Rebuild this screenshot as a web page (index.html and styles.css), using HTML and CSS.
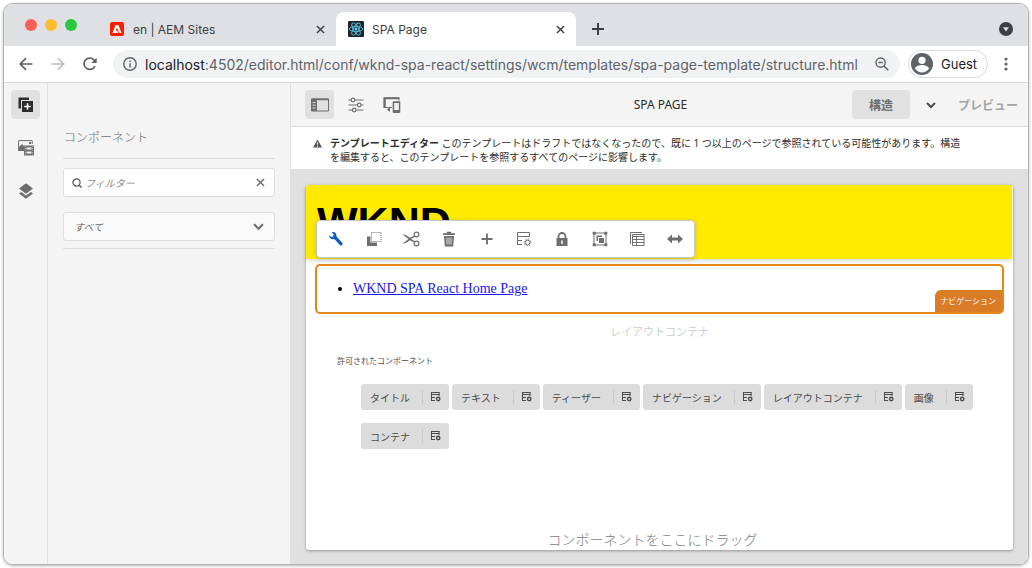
FILE: index.html
```html
<!DOCTYPE html>
<html lang="ja">
<head>
<meta charset="utf-8">
<title>SPA Page</title>
<link rel="stylesheet" href="styles.css">
</head>
<body>
<svg class="defs" aria-hidden="true">
  <symbol id="policy" viewBox="0 0 10 10"><path d="M0 .5h8.500M0 2.500h8.500M0 5.500h4M0 8.500h4M.5 0v9M8 0v4" fill="none" stroke="currentColor"/><circle cx="7.200" cy="7" r="1.700" fill="none" stroke="currentColor" stroke-width="1.400"/></symbol>
  <symbol id="cross" viewBox="0 0 10 10"><path d="M1 1l8 8M9 1L1 9" fill="none" stroke="currentColor" stroke-width="1.6"/></symbol>
  <symbol id="chevron" viewBox="0 0 10 10"><path d="M1 3l4 4 4-4" fill="none" stroke="currentColor" stroke-width="2"/></symbol>
</svg>
<div class="window">
  <header class="tabs">
    <div class="lights"><span class="light red"></span><span class="light amber"></span><span class="light green"></span></div>
    <div class="tab">
      <svg class="favicon small" viewBox="0 0 14 14"><rect width="14" height="14" rx="2" fill="#fa1e00"/><path d="M2.5 11L5.6 3h2.8l3.1 8H9.3L7 5.5 5.8 8.6h1.5l1 2.4z" fill="#fff"/></svg>
      <span class="tab-title">en | AEM Sites</span>
      <button class="plain close" aria-label="Close tab"><svg viewBox="0 0 10 10"><use href="#cross"/></svg></button>
    </div>
    <div class="tab active">
      <svg class="favicon" viewBox="0 0 16 16"><rect width="16" height="16" rx="1" fill="#20232a"/><g fill="none" stroke="#53c1de" stroke-width=".9"><ellipse cx="8" cy="8" rx="6.8" ry="2.6"/><ellipse cx="8" cy="8" rx="6.8" ry="2.6" transform="rotate(60 8 8)"/><ellipse cx="8" cy="8" rx="6.8" ry="2.6" transform="rotate(120 8 8)"/></g><circle cx="8" cy="8" r="1.4" fill="#61dafb"/></svg>
      <span class="tab-title">SPA Page</span>
      <button class="plain close" aria-label="Close tab"><svg viewBox="0 0 10 10"><use href="#cross"/></svg></button>
    </div>
    <button class="plain new-tab" aria-label="New tab"><svg viewBox="0 0 12 12"><path d="M6 0v12M0 6h12" stroke="currentColor" stroke-width="2"/></svg></button>
    <button class="plain tab-menu" aria-label="Search tabs"><svg viewBox="0 0 14 14"><circle cx="7" cy="7" r="7" fill="#3c4043"/><path d="M4 5.3h6L7 9.6z" fill="#dee0e4"/></svg></button>
  </header>

  <nav class="address">
    <button class="plain nav-btn" aria-label="Back"><svg viewBox="0 0 14 14"><path d="M13.5 7H1.5M7 1.2L1.2 7 7 12.8" fill="none" stroke="#5f6368" stroke-width="1.7"/></svg></button>
    <button class="plain nav-btn" aria-label="Forward"><svg viewBox="0 0 14 14"><path d="M.5 7h12M7 1.2L12.8 7 7 12.8" fill="none" stroke="#babcbf" stroke-width="1.5"/></svg></button>
    <button class="plain nav-btn" aria-label="Reload"><svg viewBox="0 0 14 14"><path d="M12 9A5.7 5.7 0 1 1 11 2.9L12.6 4.6" fill="none" stroke="#5f6368" stroke-width="1.7"/><path d="M13.7.7v5.4H8.3z" fill="#5f6368"/></svg></button>
    <div class="url">
      <svg class="info" viewBox="0 0 14 14"><circle cx="7" cy="7" r="6.2" fill="none" stroke="#5f6368" stroke-width="1.4"/><path d="M7 6.2v4.2M7 3.4v1.5" stroke="#5f6368" stroke-width="1.5"/></svg>
      <span class="url-text"><span class="host">localhost</span>:4502/editor.html/conf/wknd-spa-react/settings/wcm/templates/spa-page-template/structure.html</span>
      <button class="plain magnify" aria-label="Zoom"><svg viewBox="0 0 14 14"><circle cx="5.6" cy="5.6" r="4.6" fill="none" stroke="#5f6368" stroke-width="1.4"/><path d="M3.4 5.6h4.4M9 9l4.3 4.3" stroke="#5f6368" stroke-width="1.5"/></svg></button>
    </div>
    <button class="guest"><svg viewBox="0 0 22 22"><circle cx="11" cy="11" r="11" fill="#5f6368"/><circle cx="11" cy="7.3" r="3.6" fill="#fff"/><path d="M3.8 15.2c1.6-2.4 4.4-3.2 7.2-3.2s5.6.8 7.2 3.2c-1.6 2.6-4.2 4.2-7.2 4.2s-5.600-1.600-7.200-4.200z" fill="#fff"/></svg>Guest</button>
    <button class="plain dots" aria-label="Menu"><svg viewBox="0 0 4 14"><g fill="#5f6368"><circle cx="2" cy="2" r="1.6"/><circle cx="2" cy="7" r="1.6"/><circle cx="2" cy="12" r="1.6"/></g></svg></button>
  </nav>

  <div class="app">
    <nav class="rail">
      <button class="plain tool selected" aria-label="Components"><svg viewBox="0 0 16 16"><path d="M.5 11.500V.5H11V3H3v8.500z" fill="#2c2c2c"/><path d="M4 4h11v11H4z" fill="#2c2c2c"/><path d="M9.500 6.200v6.600M6.200 9.500h6.600" stroke="#fff" stroke-width="1.500"/></svg></button>
      <button class="plain tool" aria-label="Assets"><svg viewBox="0 0 16 16"><path d="M.6 11V.6h13.600V4" fill="none" stroke="#6e6e6e"/><path d="M1 11V7l3-3 2.500 2.500V11zM11 2h2v2h-2z" fill="#6e6e6e"/><path d="M6 5.500h10v10H6z" fill="#6e6e6e"/><path d="M8.500 7.500h5v2h-5zM8.500 11.500h5v2h-5z" fill="#f4f4f4"/><path d="M7.300 6v9M14.700 6v9" stroke="#ccc" stroke-width=".8" stroke-dasharray="1 1"/></svg></button>
      <button class="plain tool" aria-label="Content tree"><svg viewBox="0 0 16 16"><path d="M8 .2l7 5.300-7 5.300-7-5.300z" fill="#6e6e6e"/><path d="M1 10.600l2.200-1.600L8 12.400 12.800 9l2.200 1.600-7 5.200z" fill="#6e6e6e"/></svg></button>
    </nav>

    <aside class="panel">
      <h2 class="panel-title">コンポーネント</h2>
      <div class="field filter">
        <svg class="search" viewBox="0 0 10 10"><circle cx="4.500" cy="4.500" r="3.600" fill="none" stroke="#555" stroke-width="1.200"/><path d="M7 7l2.500 2.500" stroke="#555" stroke-width="1.500"/></svg>
        <input class="filter-input" type="text" placeholder="フィルター" aria-label="フィルター">
        <button class="plain clear" aria-label="Clear"><svg viewBox="0 0 10 10"><use href="#cross"/></svg></button>
      </div>
      <div class="field group">
        <select class="group-select" aria-label="コンポーネント"><option>すべて</option></select>
        <svg class="caret" viewBox="0 0 10 10"><use href="#chevron"/></svg>
      </div>
      <div class="list"></div>
    </aside>

    <main class="editor">
      <header class="bar">
        <div class="bar-left">
          <button class="plain tool selected" aria-label="Side panel"><svg class="wide" viewBox="0 0 18 14"><path d="M.5 1h17v12H.5z" fill="none" stroke="#6e6e6e"/><path d="M.5.5h17v1.800H.5zM.5 1H6v12H.5z" fill="#6e6e6e"/><path d="M1.500 4.500h3M1.500 7.200h3M1.500 10h3" stroke="#ddd"/></svg></button>
          <button class="plain tool" aria-label="Page information"><svg viewBox="0 0 16 16"><g fill="none" stroke="#6e6e6e" stroke-width="1.200"><path d="M.5 3h2.700M7 3h8.500M.5 8h8.800M13 8h2.500M.5 13h3.800M8.200 13h7.300"/><circle cx="5" cy="3" r="1.800"/><circle cx="11.200" cy="8" r="1.800"/><circle cx="6.200" cy="13" r="1.800"/></g></svg></button>
          <button class="plain tool" aria-label="Emulator"><svg class="wide" viewBox="0 0 18 16"><path d="M9 10.500H1.200V1h14.600v2.500" fill="none" stroke="#6e6e6e"/><path d="M.5.3h16v2H.5zM.5 1h2.300v10H.5z" fill="#6e6e6e"/><path d="M4 12.500l3-2.500v5z" fill="#6e6e6e"/><path d="M10.700 4.200h5.600a1 1 0 0 1 1 1V15a1 1 0 0 1-1 1h-5.600a1 1 0 0 1-1-1V5.200a1 1 0 0 1 1-1z" fill="#6e6e6e"/><path d="M11.200 6h4.600v7h-4.600z" fill="#f4f4f4"/></svg></button>
        </div>
        <h1 class="title">SPA PAGE</h1>
        <div class="bar-right">
          <button class="mode">構造</button>
          <button class="plain mode-menu" aria-label="Mode"><svg viewBox="0 0 10 10"><use href="#chevron"/></svg></button>
          <button class="plain preview">プレビュー</button>
        </div>
      </header>

      <section class="notice">
        <svg class="warn" viewBox="0 0 10 9"><path d="M5 0l5 9H0z" fill="#555"/><path d="M5 3v3M5 7v1.200" stroke="#fff"/></svg>
        <p class="notice-text"><b>テンプレートエディター</b> このテンプレートはドラフトではなくなったので、既に 1 つ以上のページで参照されている可能性があります。構造<br>を編集すると、このテンプレートを参照するすべてのページに影響します。</p>
      </section>

      <div class="canvas">
        <article class="page">
          <div class="banner">
            <div class="brand">WKND</div>
            <div class="actions" role="toolbar">
              <button class="plain action" aria-label="Configure"><svg viewBox="0 0 16 16"><path d="M1 4.200L3.200 6l2-.6.500-2L3.800 1.200c2.800-.8 5 1 4.600 4l6 6.800c.8 1.600-.8 3-2.200 2.200L6.200 8C3.500 8.800 1 7 1 4.200z" fill="#0d5fc0"/></svg></button>
              <button class="plain action" aria-label="Copy"><svg viewBox="0 0 16 16"><path d="M1 5.500h3.500v6H11V15H1z" fill="#6e6e6e"/><path d="M5.500 1.500h9.500v9H5.500z" fill="none" stroke="#6e6e6e" stroke-dasharray="1 1"/></svg></button>
              <button class="plain action" aria-label="Cut"><svg class="wide" viewBox="0 0 18 16"><g fill="none" stroke="#6e6e6e" stroke-width="1.200"><circle cx="14.500" cy="3.500" r="2.400"/><circle cx="14.500" cy="12.500" r="2.400"/></g><path d="M.5 3.500c3 0 5 1.500 7.500 3.200L12.200 4.400l.8 1.200L9.200 8l3.800 2.400-.8 1.200L8 9.300C5.500 11 3.500 12.500.5 12.500L6.500 8z" fill="#6e6e6e"/></svg></button>
              <button class="plain action" aria-label="Delete"><svg viewBox="0 0 16 16"><path d="M2 2.200h3.500L6.200.7h3.600l.7 1.500H14V4H2zM3 5h10l-.8 10.500H3.800z" fill="#6e6e6e"/><path d="M6 6.500v7M8 6.500v7M10 6.500v7" stroke="#fff" stroke-width=".8"/></svg></button>
              <button class="plain action" aria-label="Insert"><svg viewBox="0 0 16 16"><path d="M8 2.500v11M2.500 8h11" stroke="#6e6e6e" stroke-width="1.800"/></svg></button>
              <button class="plain action" aria-label="Policy"><svg viewBox="0 0 16 16"><g fill="none" stroke="#6e6e6e"><path d="M1.500 14V1.500h12v4h-12M1.500 9.500H6M1.500 13.500H6"/><circle cx="11.500" cy="11.500" r="2.300"/><circle cx="11.500" cy="11.500" r="3.400" stroke-dasharray="1.200 1.470"/></g></svg></button>
              <button class="plain action" aria-label="Unlock"><svg viewBox="0 0 16 16"><path d="M4.500 8V5.500a3.500 3.500 0 0 1 7 0V8" fill="none" stroke="#6e6e6e" stroke-width="1.800"/><path d="M2.500 7h11v8h-11z" fill="#6e6e6e"/><path d="M8 9.500v3.500" stroke="#fff" stroke-width="1.500"/></svg></button>
              <button class="plain action" aria-label="Group"><svg viewBox="0 0 16 16"><path d="M2 2h12v12H2z" fill="none" stroke="#6e6e6e"/><path d="M.7.7h3v3h-3zM12.300.7h3v3h-3zM.7 12.300h3v3h-3zM12.300 12.300h3v3h-3zM7 7h5v5H7zM4.500 4.500H10V6H6v4H4.500z" fill="#6e6e6e"/></svg></button>
              <button class="plain action" aria-label="Table"><svg viewBox="0 0 16 16"><path d="M1.500 13V1.500H13M3.500 3.500H15v11H3.500zM3.500 5.500H15M3.500 8.500H15M3.500 11.500H15M7.500 5.500v9" fill="none" stroke="#6e6e6e"/></svg></button>
              <button class="plain action" aria-label="Layout"><svg viewBox="0 0 16 16"><path d="M0 8l5-4.500v3h6v-3L16 8l-5 4.500v-3H5v3z" fill="#6e6e6e"/></svg></button>
            </div>
          </div>

          <div class="navigation">
            <ul class="links"><li><a href="#home">WKND SPA React Home Page</a></li></ul>
            <span class="badge">ナビゲーション</span>
          </div>

          <div class="placeholder">レイアウトコンテナ</div>
          <h3 class="allowed-title">許可されたコンポーネント</h3>
          <div class="chips">
            <div class="chip">タイトル<button class="plain chip-btn" aria-label="タイトル"><svg viewBox="0 0 10 10"><use href="#policy"/></svg></button></div>
            <div class="chip">テキスト<button class="plain chip-btn" aria-label="テキスト"><svg viewBox="0 0 10 10"><use href="#policy"/></svg></button></div>
            <div class="chip">ティーザー<button class="plain chip-btn" aria-label="ティーザー"><svg viewBox="0 0 10 10"><use href="#policy"/></svg></button></div>
            <div class="chip">ナビゲーション<button class="plain chip-btn" aria-label="ナビゲーション"><svg viewBox="0 0 10 10"><use href="#policy"/></svg></button></div>
            <div class="chip">レイアウトコンテナ<button class="plain chip-btn" aria-label="レイアウトコンテナ"><svg viewBox="0 0 10 10"><use href="#policy"/></svg></button></div>
            <div class="chip">画像<button class="plain chip-btn" aria-label="画像"><svg viewBox="0 0 10 10"><use href="#policy"/></svg></button></div>
            <div class="chip">コンテナ<button class="plain chip-btn" aria-label="コンテナ"><svg viewBox="0 0 10 10"><use href="#policy"/></svg></button></div>
          </div>
          <div class="drop">コンポーネントをここにドラッグ</div>
        </article>
      </div>
    </main>
  </div>
</div>
</body>
</html>
```
FILE: styles.css
```css
* { box-sizing: border-box; }
body { margin: 0; padding: 3px; min-height: 100vh; display: flex; background: #fff; font-family: "Noto Sans", "Noto Sans CJK JP", sans-serif; color: #4b4b4b; }
h1, h2, h3, p, ul { margin: 0; }
svg { display: block; }
button, input, select { font: inherit; color: inherit; }
.defs { position: absolute; width: 0; height: 0; }
.plain { border: 0; padding: 0; background: none; display: flex; align-items: center; justify-content: center; }

.window { flex: 1; min-width: 0; display: flex; flex-direction: column; border: 1px solid #b4b4b4; border-radius: 10px; overflow: hidden; box-shadow: 0 1px 3px rgba(0,0,0,.3); }

.tabs { display: flex; align-items: center; height: 42px; background: #dee0e4; font-family: Inter, sans-serif; font-size: 12px; color: #3c4043; padding-top: 8px; }
.lights { display: flex; gap: 8px; padding: 0 19px 0 21px; margin-bottom: 8px; }
.light { width: 12px; height: 12px; border-radius: 50%; }
.red { background: #ff5f57; }
.amber { background: #febc2e; }
.green { background: #28c840; }
.tab { display: flex; align-items: center; width: 240px; height: 34px; padding: 0 11px 0 12px; gap: 8px; }
.tab:not(.active) { padding-left: 14px; gap: 9px; }
.tab.active { background: #fff; border-radius: 8px 8px 0 0; }
.favicon { width: 16px; height: 16px; }
.favicon.small { width: 14px; height: 14px; }
.tab-title { flex: 1; }
.close svg { width: 9px; height: 9px; }
.new-tab { margin-left: 16px; }
.new-tab svg { width: 12px; height: 12px; }
.tab-menu { margin: 0 15px 0 auto; }
.tab-menu svg { width: 14px; height: 14px; }

.address { display: flex; align-items: center; height: 37px; background: #fff; border-bottom: 1px solid #d9d9d9; padding: 0 20px 0 15px; font-family: Inter, sans-serif; font-size: 14px; }
.nav-btn { margin-right: 18px; }
.nav-btn + .nav-btn + .nav-btn { margin-right: 16px; }
.nav-btn svg { width: 14px; height: 14px; }
.url { flex: 1; min-width: 0; display: flex; align-items: center; gap: 8px; height: 28px; margin-right: 8px; padding: 0 11px 0 10px; border-radius: 14px; background: #f1f2f4; color: #5f6368; }
.info, .magnify svg { width: 14px; height: 14px; }
.url-text { flex: 1; min-width: 0; white-space: nowrap; overflow: hidden; }
.host { color: #202124; }
.guest { display: flex; align-items: center; gap: 8px; width: 80px; height: 28px; padding: 0 2px; border: 1px solid #dadce0; border-radius: 14px; background: #fff; color: #202124; font-size: 13px; }
.guest svg { width: 22px; height: 22px; }
.dots { margin-left: 16px; }
.dots svg { width: 4px; height: 14px; }

.app { flex: 1; display: flex; min-height: 0; background: #f4f4f4; }
.rail { display: flex; flex-direction: column; align-items: center; gap: 14px; width: 44px; padding-top: 7px; border-right: 1px solid #dedede; }
.tool { width: 29px; height: 29px; border-radius: 4px; }
.tool svg { width: 16px; height: 16px; }
.tool svg.wide { width: 18px; }
.tool.selected { background: #e0e0e0; }
.panel { width: 243px; padding: 44px 15px 0; border-right: 1px solid #dedede; font-size: 10px; }
.panel-title { height: 32px; padding-left: 1px; border-bottom: 1px solid #dedede; font-size: 12px; font-weight: 300; line-height: 22px; color: #6e6e6e; }
.field { display: flex; align-items: center; height: 29px; border: 1px solid #dedede; border-radius: 3px; background: #fff; font-style: italic; color: #6e6e6e; }
.filter { margin-top: 9px; padding: 0 9px 0 8px; gap: 3px; }
.search { width: 10px; height: 10px; }
.filter-input { flex: 1; min-width: 0; padding: 0; border: 0; background: none; }
.filter-input::placeholder { color: #8a8a8a; }
.clear svg { width: 9px; height: 9px; }
.group { margin-top: 15px; padding-right: 10px; background: #fafafa; }
.group-select { flex: 1; height: 27px; padding: 0 10px; border: 0; background: none; appearance: none; }
.caret { width: 11px; height: 11px; }
.list { margin-top: 7px; border-top: 1px solid #dedede; }

.editor { flex: 1; min-width: 0; display: flex; flex-direction: column; }
.bar { display: grid; grid-template-columns: 1fr auto 1fr; align-items: center; height: 44px; padding: 0 12px 0 14px; border-bottom: 1px solid #dedede; font-size: 12px; }
.bar-left { display: flex; gap: 7px; }
.title { font-size: 12px; font-weight: 400; color: #2c2c2c; }
.bar-right { display: flex; align-items: center; justify-content: flex-end; margin-right: -2px; }
.mode { width: 58px; height: 29px; border: 0; border-radius: 4px; background: #e1e1e1; font-weight: 600; color: #6e6e6e; }
.mode-menu { margin: 0 22px 0 16px; }
.mode-menu svg { width: 10px; height: 10px; }
.preview { font-weight: 600; color: #a4a4a4; }
.notice { display: flex; gap: 8px; padding: 9px 20px 5px 22px; background: #fff; font-size: 10px; line-height: 14px; color: #2c2c2c; }
.warn { width: 9px; height: 9px; margin-top: 3px; }
.notice-text { flex: 1; white-space: nowrap; }
.canvas { flex: 1; display: flex; padding: 16px 15px 14px; background: #e0e0e0; }
.page { flex: 1; min-width: 0; display: flex; flex-direction: column; background: #fff; border-radius: 3px; box-shadow: 0 1px 3px rgba(0,0,0,.35); }
.banner { position: relative; height: 74px; margin-right: 1px; background: #ffea00; border-radius: 3px 0 0; box-shadow: 0 2px 5px rgba(0,0,0,.15); }
.brand { padding: 16px 11px 0; font: 700 43px/42px "Liberation Sans", Arial, sans-serif; color: #000; }
.actions { position: absolute; z-index: 1; left: 10px; top: 35px; display: flex; width: 379px; height: 38px; background: #fff; border: 1px solid #c4c9cc; border-radius: 4px; box-shadow: 0 1px 4px rgba(0,0,0,.2); }
.action { flex: 1; }
.action svg { width: 16px; height: 16px; }
.action svg.wide { width: 18px; }
.navigation { position: relative; margin: 5px 9px 0; height: 50px; display: flex; align-items: center; border: 2px solid #e68619; border-radius: 5px; }
.links { padding-left: 36px; font: 14px/20px "Liberation Serif", "Times New Roman", serif; color: #000; }
.links a { color: #1717ee; }
.badge { position: absolute; right: 0; bottom: 0; padding: 0 6px 0 5px; border-radius: 6px 0 0; background: #da7b27; color: #fff; font-size: 8px; line-height: 22px; }
.placeholder { padding-top: 10px; text-align: center; font-size: 11px; line-height: 16px; font-weight: 300; color: #b5b5b5; }
.allowed-title { padding: 14px 31px 0; font-size: 8px; line-height: 14px; font-weight: 400; }
.chips { display: flex; flex-wrap: wrap; gap: 13px 3px; padding: 16px 20px 0 55px; }
.chip { display: flex; align-items: center; height: 26px; padding: 0 8px 0 9px; gap: 12px; border-radius: 3px; background: #dcdcdc; font-size: 10px; }
.chip-btn { height: 14px; padding-left: 8px; border-left: 1px solid #c8c8c8; }
.chip-btn svg { width: 10px; height: 10px; }
.drop { margin-top: auto; padding-right: 14px; text-align: center; font-size: 14px; line-height: 20px; font-weight: 300; color: #7d7d7d; }
```
